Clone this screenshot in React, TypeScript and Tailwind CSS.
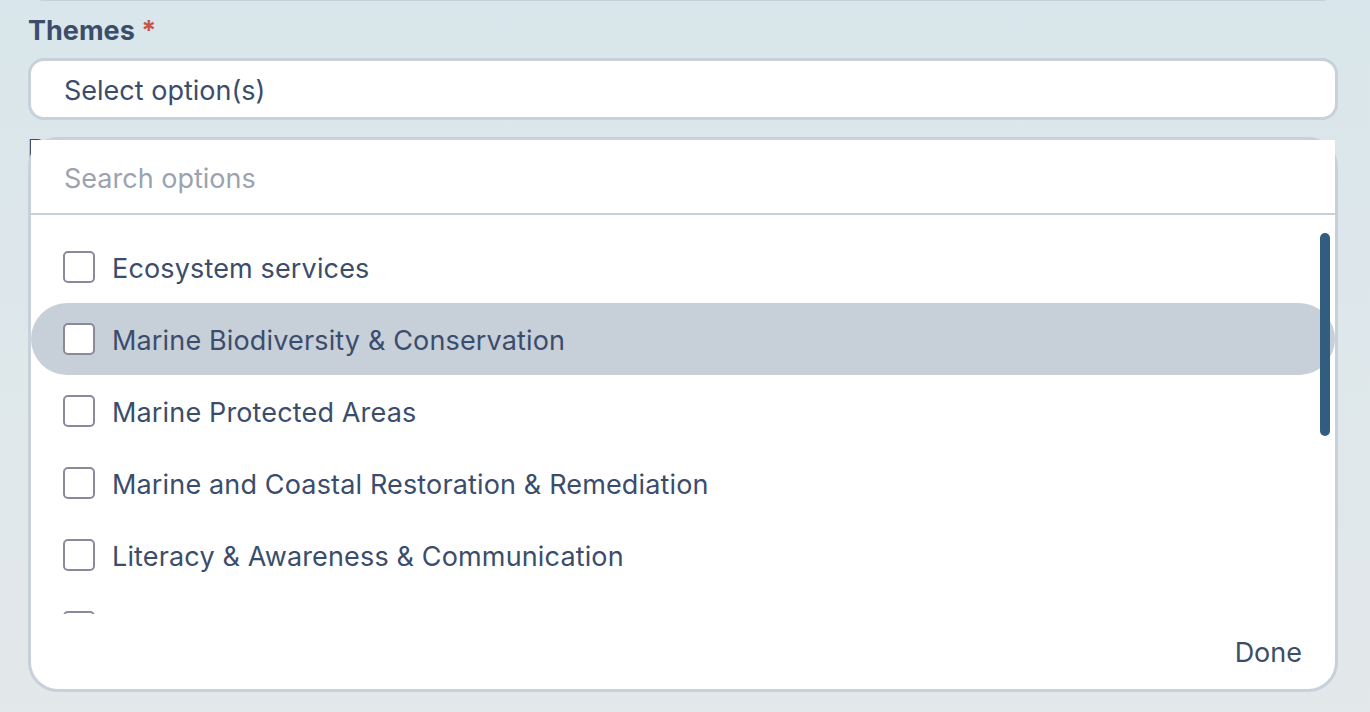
import React from "react";

const options = [
  "Ecosystem services",
  "Marine Biodiversity & Conservation",
  "Marine Protected Areas",
  "Marine and Coastal Restoration & Remediation",
  "Literacy & Awareness & Communication",
  "Ocean Governance",
];

function Checkbox() {
  return (
    <span className="block w-[32px] h-[32px] shrink-0 rounded-[5px] border-2 border-[#8b899a] bg-white" />
  );
}

export default function App() {
  return (
    <div className="w-[1370px] h-[712px] overflow-hidden bg-gradient-to-b from-[#d9e6eb] to-[#e3e8ea] font-['Inter','Noto_Sans',sans-serif] text-[#3b4d6b]">
      <div className="pl-[28px] pr-[32px]">
        <div className="h-[40px] -mt-[39px] rounded-[16px] border-[3px] border-[#c8d0da] bg-white" />
        <div className="mt-[14px] text-[27px] leading-[32px] font-bold">
          Themes <span className="text-[#c8554c]">*</span>
        </div>
        <div className="mt-[11px] h-[62px] rounded-[16px] border-[3px] border-[#c8d0da] bg-white flex items-center pl-[33px] text-[27px]">
          <span className="translate-y-[2px]">Select option(s)</span>
        </div>
        <div className="relative mt-[14px]">
          <div className="text-[27px] leading-[32px] font-bold">Description</div>
          <div className="absolute left-0 right-0 top-[3px] h-[555px] rounded-[30px] border-[3px] border-[#c8d0da] bg-white flex flex-col">
            <div className="h-[75px] shrink-0 bg-white border-b-2 border-[#c8d0da] flex items-center pl-[33px] text-[27px] text-[#9ca3af]">
              <span className="translate-y-[3px]">Search options</span>
            </div>
            <div className="relative h-[399px] shrink-0 overflow-hidden">
              <div className="pt-[16px] flex flex-col">
                {options.map((o, i) => (
                  <div
                    key={o}
                    className={
                      "h-[72px] shrink-0 flex items-center gap-[17px] pl-[32px] rounded-full text-[27px] tracking-[0.15px] " +
                      (i === 1 ? "bg-[#c7cfd9]" : "")
                    }
                  >
                    <Checkbox />
                    <span className="translate-y-[2px]">{o}</span>
                  </div>
                ))}
              </div>
              <div className="absolute right-[5px] top-[18px] w-[10px] h-[203px] rounded-full bg-[#315d7f]" />
            </div>
            <div className="flex-1 flex items-center justify-end pr-[33px] text-[27px]">
              <span className="translate-y-[2px]">Done</span>
            </div>
          </div>
        </div>
      </div>
    </div>
  );
}
